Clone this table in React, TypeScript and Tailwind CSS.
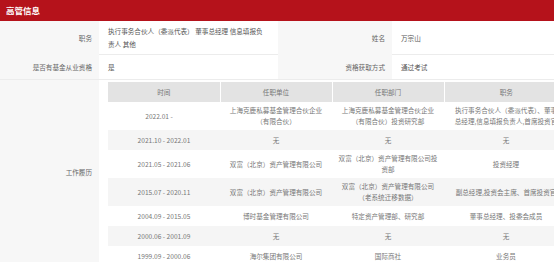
const font = "font-['Noto_Sans_CJK_SC','Noto_Sans',sans-serif]"

type Job = { time: string; unit: string[]; dept: string[]; post: string[]; pad?: boolean }

const jobs: Job[] = [
  {
    time: '2022.01 -',
    unit: ['上海克鹿私募基金管理合伙企业', '（有限合伙）'],
    dept: ['上海克鹿私募基金管理合伙企业', '（有限合伙）投资研究部'],
    post: ['执行事务合伙人（委派代表）、董事', '总经理,信息填报负责人,首席投资官'],
    pad: true,
  },
  { time: '2021.10 - 2022.01', unit: ['无'], dept: ['无'], post: ['无'] },
  {
    time: '2021.05 - 2021.06',
    unit: ['双富（北京）资产管理有限公司'],
    dept: ['双富（北京）资产管理有限公司投', '资部'],
    post: ['投资经理'],
  },
  {
    time: '2015.07 - 2020.11',
    unit: ['双富（北京）资产管理有限公司'],
    dept: ['双富（北京）资产管理有限公司', '（老系统迁移数据）'],
    post: ['副总经理,投资会主席、首席投资官'],
  },
  { time: '2004.09 - 2015.05', unit: ['博时基金管理有限公司'], dept: ['特定资产管理部、研究部'], post: ['董事总经理、投委会成员'] },
  { time: '2000.06 - 2001.09', unit: ['无'], dept: ['无'], post: ['无'] },
  { time: '1999.09 - 2000.06', unit: ['海尔集团有限公司'], dept: ['国际商社'], post: ['业务员'] },
]

function Label({ children }: { children: React.ReactNode }) {
  return (
    <div className="bg-[#f7f7f7] flex items-center justify-end pr-[7px] text-[#666]">{children}</div>
  )
}

function Value({ children }: { children: React.ReactNode }) {
  return <div className="flex items-center px-[9px] py-[4px] text-[#555]">{children}</div>
}

function Lines({ lines }: { lines: string[] }) {
  return (
    <>
      {lines.map((l, i) => (
        <div key={i} className="whitespace-nowrap">
          {l}
        </div>
      ))}
    </>
  )
}

function HistoryTable() {
  const th = 'h-[20px] px-[4px] font-normal border-r border-white last:border-r-0'
  const td = 'h-[20px] px-[4px] py-[3px] align-middle'
  return (
    <table className="table-fixed border-collapse text-center text-[#777] leading-[11px]">
      <colgroup>
        <col className="w-[112px]" />
        <col className="w-[112px]" />
        <col className="w-[112px]" />
        <col className="w-[124px]" />
      </colgroup>
      <thead>
        <tr className="bg-[#e3e3e3] text-[#777]">
          <th className={th}>时间</th>
          <th className={th}>任职单位</th>
          <th className={th}>任职部门</th>
          <th className={th}>职务</th>
        </tr>
      </thead>
      <tbody>
        {jobs.map((j, i) => (
          <tr key={i} className={i % 2 === 1 ? 'bg-[#f5f5f5]' : 'bg-white'}>
            <td className={td}>
              {j.time}
              {j.pad && <span className="inline-block w-[10px]" />}
            </td>
            <td className={td}>
              <Lines lines={j.unit} />
            </td>
            <td className={td}>
              <Lines lines={j.dept} />
            </td>
            <td className={td}>
              <Lines lines={j.post} />
            </td>
          </tr>
        ))}
      </tbody>
    </table>
  )
}

export default function App() {
  return (
    <div className={`w-[554px] h-[262px] overflow-hidden bg-white text-[6.6px] ${font}`}>
      <div className="w-[580px]">
        <div className="h-[21px] bg-[#b5121b] flex items-center px-[6px] text-white font-bold text-[8.5px]">
          高管信息
        </div>

        <div className="grid grid-cols-[99px_179px_114px_1fr] h-[34px] border-b border-[#ececec] leading-[13px]">
          <Label>职务</Label>
          <Value>
            <span>
              执行事务合伙人（委派代表） 董事总经理 信息填报负
              <br />
              责人 其他
            </span>
          </Value>
          <Label>姓名</Label>
          <Value>万宗山</Value>
        </div>

        <div className="grid grid-cols-[99px_179px_114px_1fr] h-[25px] border-b border-[#ececec] leading-[13px]">
          <Label>是否有基金从业资格</Label>
          <Value>是</Value>
          <Label>资格获取方式</Label>
          <Value>通过考试</Value>
        </div>

        <div className="grid grid-cols-[99px_1fr]">
          <Label>工作履历</Label>
          <div className="pl-[9px] pt-[2px]">
            <HistoryTable />
          </div>
        </div>
      </div>
    </div>
  )
}
